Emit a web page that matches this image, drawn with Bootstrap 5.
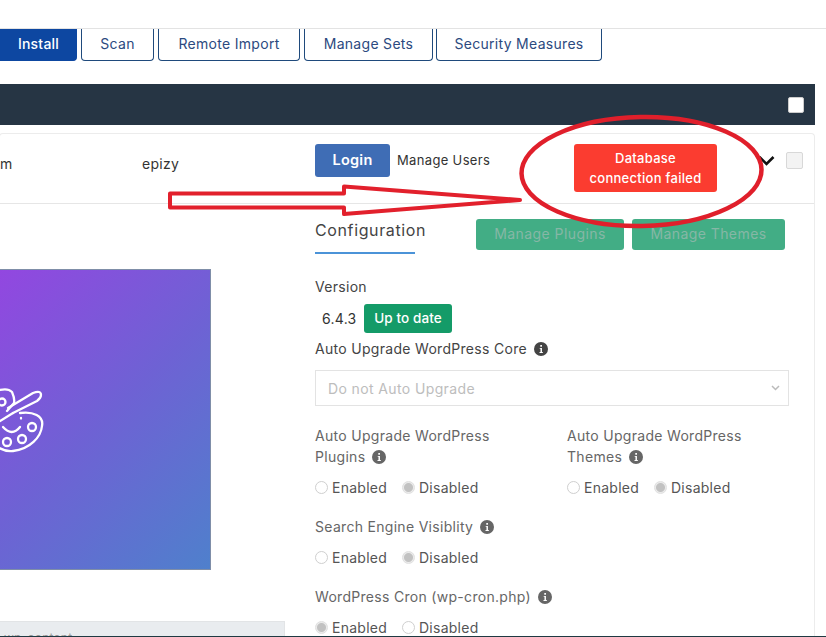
<!DOCTYPE html>
<html lang="en">
<head>
<meta charset="utf-8">
<title>WordPress Manager</title>
<link href="https://cdn.jsdelivr.net/npm/bootstrap@5.3.0/dist/css/bootstrap.min.css" rel="stylesheet">
<script src="https://cdn.jsdelivr.net/npm/bootstrap@5.3.0/dist/js/bootstrap.bundle.min.js"></script>
<style>
html,body{height:637px;overflow:hidden;background:#fff}
body{font-family:Inter,"Liberation Sans",sans-serif;font-size:14px;letter-spacing:.28px;color:#444}
.pg{position:relative;width:826px;height:637px;overflow:hidden;display:flex;flex-direction:column}
.tabs{margin-top:28px;border-top:1px solid #e3e3e3;height:32px;gap:4px;flex:none}
.tb{height:32px;border:1px solid #1f4a7c;border-top:0;border-radius:0 0 4px 4px;background:#fff;color:#2c4a80;font-size:14px;letter-spacing:.3px;padding:0 0 3px;display:flex;align-items:center;justify-content:center}
.tb-in{width:77px;background:#0d47a1;border-color:#0d47a1;color:#fff;font-weight:500;border-radius:0 0 4px 0;letter-spacing:.2px}
.tb-sc{width:73px}.tb-ri{width:142px}.tb-ms{width:129px;margin-right:-1px}.tb-se{width:166px}
.dbar{margin-top:24px;width:815px;height:41px;background:#263544;padding-right:11px;flex:none}
.wck{width:16px;height:16px;background:#fff;border:1px solid #ccc;border-radius:2px}
.wcard{margin-top:8px;margin-left:-1px;width:816px;flex:1;min-height:0;border:1px solid #ececec;border-bottom:0;border-radius:4px 4px 0 0;overflow:hidden}
.toprow{height:70px;border-bottom:1px solid #e6e6e6;flex:none}
.c-m{width:142px;padding-top:19px;font-size:14px;color:#333}
.c-e{width:173px;padding-top:19px;font-size:14px;color:#333}
.b-login{width:75px;height:33px;margin-top:10px;background:#3f6db5;border-radius:3px;color:#fff;font-weight:600;font-size:14.5px;display:flex;align-items:center;justify-content:center;padding-bottom:2px}
.l-users{width:184px;padding:17px 0 0 7px;font-size:13px;color:#333;letter-spacing:.34px}
.b-fail{width:143px;height:48px;margin-top:10px;background:#fb3c30;border-radius:3px;color:#fff;font-size:13px;line-height:20px;font-weight:500;text-align:center;padding-top:4px}
.chev{margin:21px 0 0 41px;width:17px;height:11px;flex:none}
.gck{width:17px;height:17px;margin:18px 0 0 11px;background:#f3f3f3;border:1px solid #d8d8d8;border-radius:2px}
.lft{width:315px;flex:none;padding-top:65px}
.art{width:211px;height:301px;background:linear-gradient(135deg,#9247e0 0%,#6e62d4 50%,#4f80cc 100%);border:1px solid #7f8ea8;border-left:0;overflow:hidden}
.artic{display:block;margin-top:115px}
.graybar{width:285px;height:16px;margin-top:51px;background:#e9ecef;border:1px solid #e2e4e6;border-left:0;border-bottom:0;color:#999;font-size:12px;line-height:31px;overflow:hidden;padding-left:4px}
.rgt{width:474px;flex:none;position:relative}
.cfghd{height:50px;margin-top:15px}
.cfgt{width:100px;height:35px;border-bottom:2px solid #4b93d8;font-size:16px;letter-spacing:.62px;color:#444;line-height:22px;flex:none}
.b-mg{height:31px;background:#42ad85;border-radius:3px;color:#86b7a6;font-size:14px;letter-spacing:.42px;display:flex;align-items:center;justify-content:center;flex:none;padding-bottom:2px}
.mg1{width:148px;margin-left:61px}.mg2{width:153px;margin-left:8px}
.lbl{line-height:21px;color:#444;letter-spacing:.3px}
.lblm{color:#666}
.gp-v{margin-top:7px}.gp-a{margin-top:5px}.gp-r{margin-top:19px}.gp-s{margin-top:18px}
.ver{margin-top:7px;height:29px}
.ver span:first-child{width:49px;padding-left:7px;color:#333}
.uptd{width:88px;height:29px;background:#149b68;border-radius:3px;color:#fff;font-weight:500;font-size:13.5px;display:flex;align-items:center;justify-content:center;letter-spacing:.1px}
.ifo{width:14px;height:14px;margin-left:7px;vertical-align:-2px}
.fsel{width:474px;height:36px;border:1px solid #e3e3e3;color:#bdbdbd;padding-left:12px;font-size:14px;letter-spacing:.38px;margin-top:11px;background:#fff}
.cl2{width:252px;flex:none}
.rd{margin-top:10px;height:21px;gap:0}
.rdi{width:13px;height:13px;margin:0 4px 0 0;float:none;border:1px solid #cfcfcf;background:#fff;flex:none;opacity:1!important}
.rdi:checked{background:radial-gradient(circle,#c2c2c2 0 4px,#ebebeb 5px);border-color:#e0e0e0}
.rdl{color:#555;opacity:1!important;letter-spacing:.26px;line-height:21px}
.en{width:70px}
.bline{position:absolute;left:0;right:0;bottom:0;height:1px;background:#1f3a42}
.anno{position:absolute;left:0;top:0;width:826px;height:637px;pointer-events:none}
</style>
</head>
<body>
<div class="pg">
  <div class="tabs d-flex">
    <div class="tb tb-in">Install</div>
    <div class="tb tb-sc">Scan</div>
    <div class="tb tb-ri">Remote Import</div>
    <div class="tb tb-ms">Manage Sets</div>
    <div class="tb tb-se">Security Measures</div>
  </div>
  <div class="dbar d-flex justify-content-end align-items-center"><div class="wck"></div></div>
  <div class="wcard d-flex flex-column">
    <div class="toprow d-flex">
      <div class="c-m">m</div>
      <div class="c-e">epizy</div>
      <div class="b-login">Login</div>
      <div class="l-users">Manage Users</div>
      <div class="b-fail">Database<br>connection failed</div>
      <svg class="chev" viewBox="0 0 17 11"><path d="M1.500 2 8.500 9l7-7" fill="none" stroke="#111" stroke-width="2.600"/></svg>
      <div class="gck"></div>
    </div>
    <div class="d-flex flex-grow-1">
      <div class="lft">
        <div class="art">
          <svg class="artic" width="60" height="80" viewBox="0 0 60 80">
            <g fill="none" stroke="#fff" stroke-width="2.300" stroke-linecap="round" stroke-linejoin="round">
              <path d="M20 28C33 26 44 31 42 41C41 52 30 64 13 66C7 67 2 65-4 61"/>
              <path d="M8 23L33 8Q41 5 41 10Q41 13 37 16L13 28"/>
              <path d="M0 5Q8 3 12 7Q15 14 14 18L7 26"/>
              <path d="M0 36L13 28"/>
              <path d="M3 42Q12 52 20 42"/>
              <path d="M21 33v.500"/>
              <circle cx="32" cy="42" r="4"/><circle cx="22" cy="54" r="4"/><circle cx="7" cy="57" r="4"/><circle cx="2" cy="17" r="3.500"/>
            </g>
          </svg>
        </div>
        <div class="graybar">wp-content</div>
      </div>
      <div class="rgt">
        <div class="cfghd d-flex">
          <div class="cfgt">Configuration</div>
          <div class="b-mg mg1">Manage Plugins</div>
          <div class="b-mg mg2">Manage Themes</div>
        </div>
        <div class="lbl gp-v">Version</div>
        <div class="ver d-flex align-items-center"><span>6.4.3</span><span class="uptd">Up to date</span></div>
        <div class="lbl gp-a">Auto Upgrade WordPress Core<svg class="ifo" viewBox="0 0 16 16"><circle cx="8" cy="8" r="8" fill="#444"/><path d="M6.500 6.800h2.600v4.700h1v1H6.300v-1h1.100V7.800H6.500zM7.200 3.500h1.900v2H7.200z" fill="#fff"/></svg></div>
        <div class="fsel d-flex align-items-center justify-content-between pe-2">Do not Auto Upgrade <svg width="9" height="6" viewBox="0 0 9 6"><path d="M1 1l3.500 3.500L8 1" fill="none" stroke="#bbb" stroke-width="1.500"/></svg></div>
        <div class="d-flex gp-r">
          <div class="cl2 lbl lblm">Auto Upgrade WordPress<br>Plugins<svg class="ifo" viewBox="0 0 16 16"><circle cx="8" cy="8" r="8" fill="#666"/><path d="M6.500 6.800h2.600v4.700h1v1H6.300v-1h1.100V7.800H6.500zM7.200 3.500h1.900v2H7.200z" fill="#fff"/></svg>
            <div class="rd d-flex align-items-center"><input class="form-check-input rdi" type="radio" name="a" disabled><label class="rdl en">Enabled</label><input class="form-check-input rdi" type="radio" name="a" disabled checked><label class="rdl">Disabled</label></div>
          </div>
          <div class="cl2 lbl lblm">Auto Upgrade WordPress<br>Themes<svg class="ifo" viewBox="0 0 16 16"><circle cx="8" cy="8" r="8" fill="#666"/><path d="M6.500 6.800h2.600v4.700h1v1H6.300v-1h1.100V7.800H6.500zM7.200 3.500h1.900v2H7.200z" fill="#fff"/></svg>
            <div class="rd d-flex align-items-center"><input class="form-check-input rdi" type="radio" name="b" disabled><label class="rdl en">Enabled</label><input class="form-check-input rdi" type="radio" name="b" disabled checked><label class="rdl">Disabled</label></div>
          </div>
        </div>
        <div class="lbl lblm gp-s">Search Engine Visiblity<svg class="ifo" viewBox="0 0 16 16"><circle cx="8" cy="8" r="8" fill="#666"/><path d="M6.500 6.800h2.600v4.700h1v1H6.300v-1h1.100V7.800H6.500zM7.200 3.500h1.900v2H7.200z" fill="#fff"/></svg></div>
        <div class="rd d-flex align-items-center"><input class="form-check-input rdi" type="radio" name="c" disabled><label class="rdl en">Enabled</label><input class="form-check-input rdi" type="radio" name="c" disabled checked><label class="rdl">Disabled</label></div>
        <div class="lbl lblm gp-s">WordPress Cron (wp-cron.php)<svg class="ifo" viewBox="0 0 16 16"><circle cx="8" cy="8" r="8" fill="#666"/><path d="M6.500 6.800h2.600v4.700h1v1H6.300v-1h1.100V7.800H6.500zM7.200 3.500h1.900v2H7.200z" fill="#fff"/></svg></div>
        <div class="rd d-flex align-items-center"><input class="form-check-input rdi" type="radio" name="d" disabled checked><label class="rdl en">Enabled</label><input class="form-check-input rdi" type="radio" name="d" disabled><label class="rdl">Disabled</label></div>
      </div>
    </div>
  </div>
  <div class="bline"></div>
  <svg class="anno" viewBox="0 0 826 637">
    <ellipse cx="641.500" cy="171.500" rx="120" ry="54.500" transform="rotate(-1 641 171)" fill="none" stroke="#e01f2b" stroke-width="4.500"/>
    <path d="M170 193.500H344V186.500L520 200 344 214V207.500H170Z" fill="none" stroke="#e2202c" stroke-width="4" stroke-linejoin="round"/>
  </svg>
</div>
</body>
</html>
